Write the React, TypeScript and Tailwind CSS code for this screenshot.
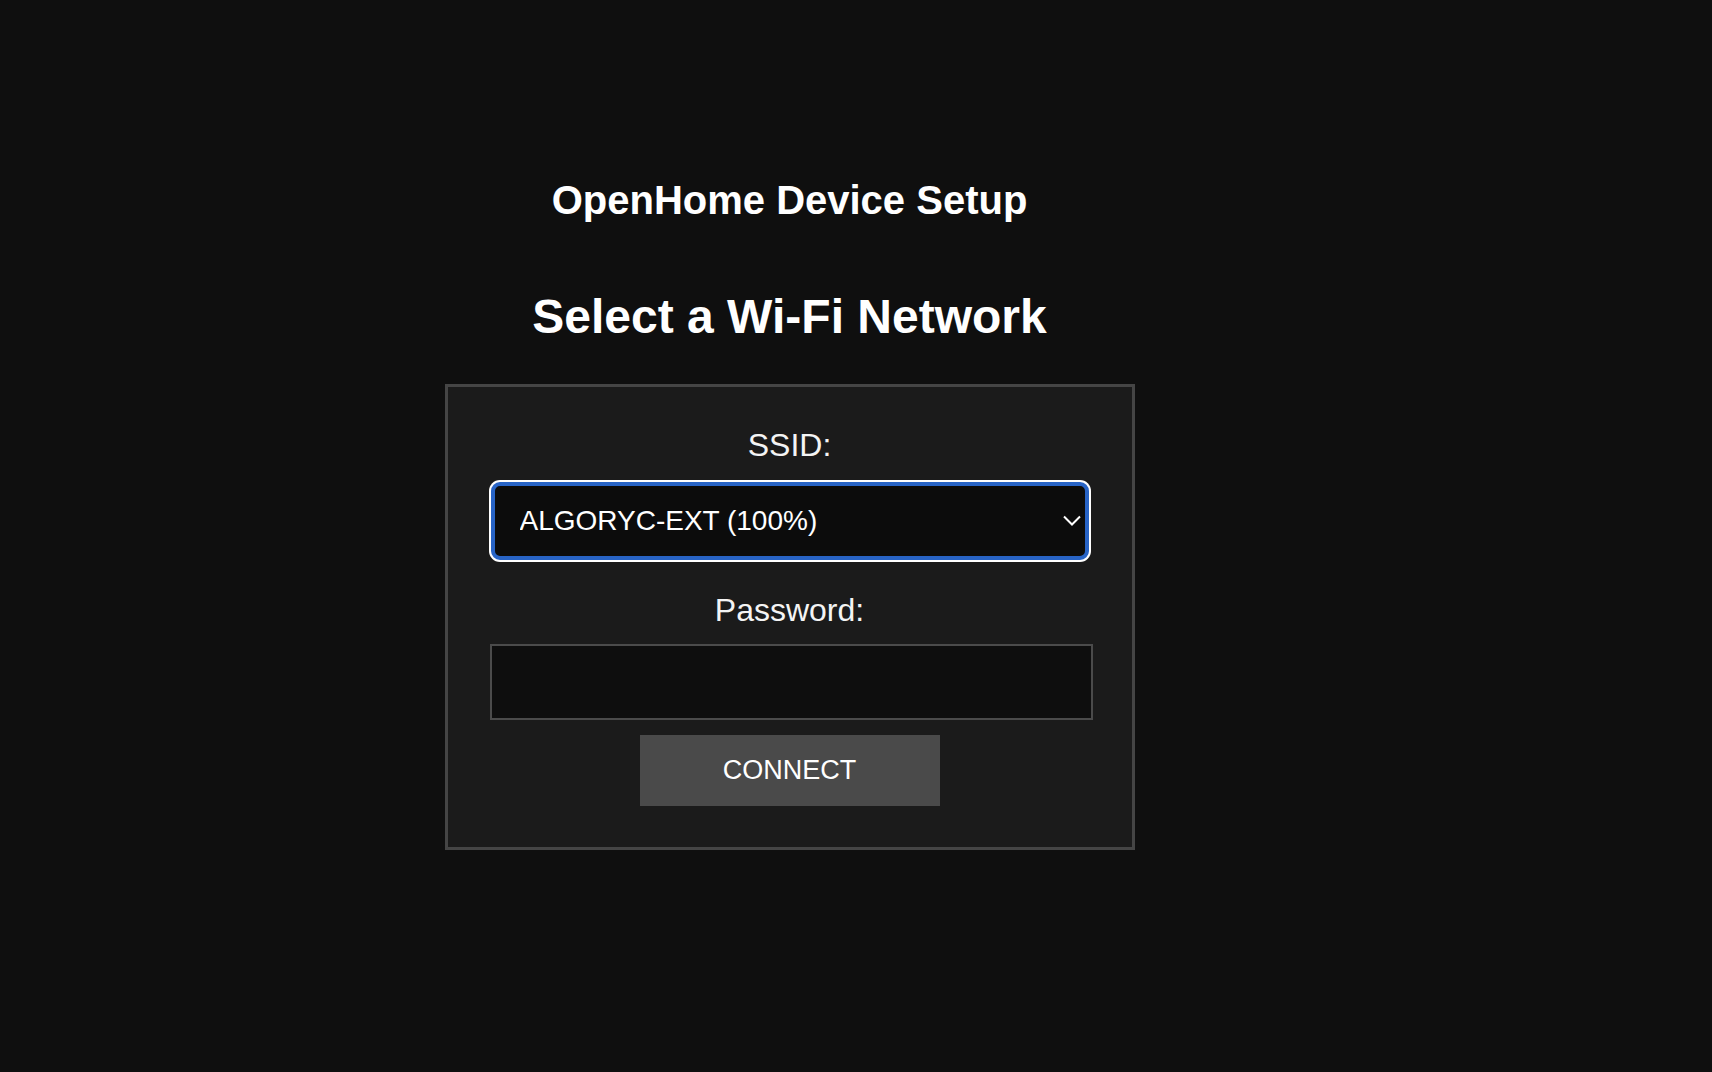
const networks = ["ALGORYC-EXT (100%)"];

export default function App() {
  return (
    <div className="min-h-[1072px] w-full bg-[#0f0f0f] text-white font-['Liberation_Sans',Arial,sans-serif]">
      <div className="w-[1579px] flex flex-col items-center pt-[177px]">
        <h1 className="text-[40px] leading-[46px] font-bold">OpenHome Device Setup</h1>
        <h2 className="mt-[66px] text-[48px] leading-[55px] font-bold">Select a Wi-Fi Network</h2>

        {/* Form panel */}
        <div className="mt-[40px] w-[690px] border-[3px] border-[#454545] bg-[#1b1b1b] px-[40px] pt-[40px] pb-[41px] flex flex-col items-center">
          <label className="text-[32px] leading-[37px] text-[#f4f4f4]">SSID:</label>
          <div className="relative mt-[16px] w-[602px] h-[82px] rounded-[11px] bg-white p-[2px]">
            <select className="w-full h-full appearance-none rounded-[9px] border-[4px] border-[#2864c6] bg-[#0c0c0c] pl-[25px] text-[28px] text-white outline-none">
              {networks.map((n) => (
                <option key={n}>{n}</option>
              ))}
            </select>
            <svg
              className="absolute right-[10px] top-[35px] pointer-events-none"
              width="18"
              height="11"
              viewBox="0 0 18 11"
              fill="none"
            >
              <polyline points="1,1.5 9,9.5 17,1.5" stroke="white" strokeWidth="2" />
            </svg>
          </div>

          <label className="mt-[30px] text-[32px] leading-[37px] text-[#f4f4f4]">Password:</label>
          <input
            type="password"
            className="mt-[15px] ml-[4px] w-[603px] h-[76px] border-2 border-[#4b4b4b] bg-[#0e0e0e] px-4 text-[28px] text-white outline-none"
          />

          <button className="mt-[15px] w-[300px] h-[71px] bg-[#4a4a4a] text-[27px] text-white">
            CONNECT
          </button>
        </div>
      </div>
    </div>
  );
}
